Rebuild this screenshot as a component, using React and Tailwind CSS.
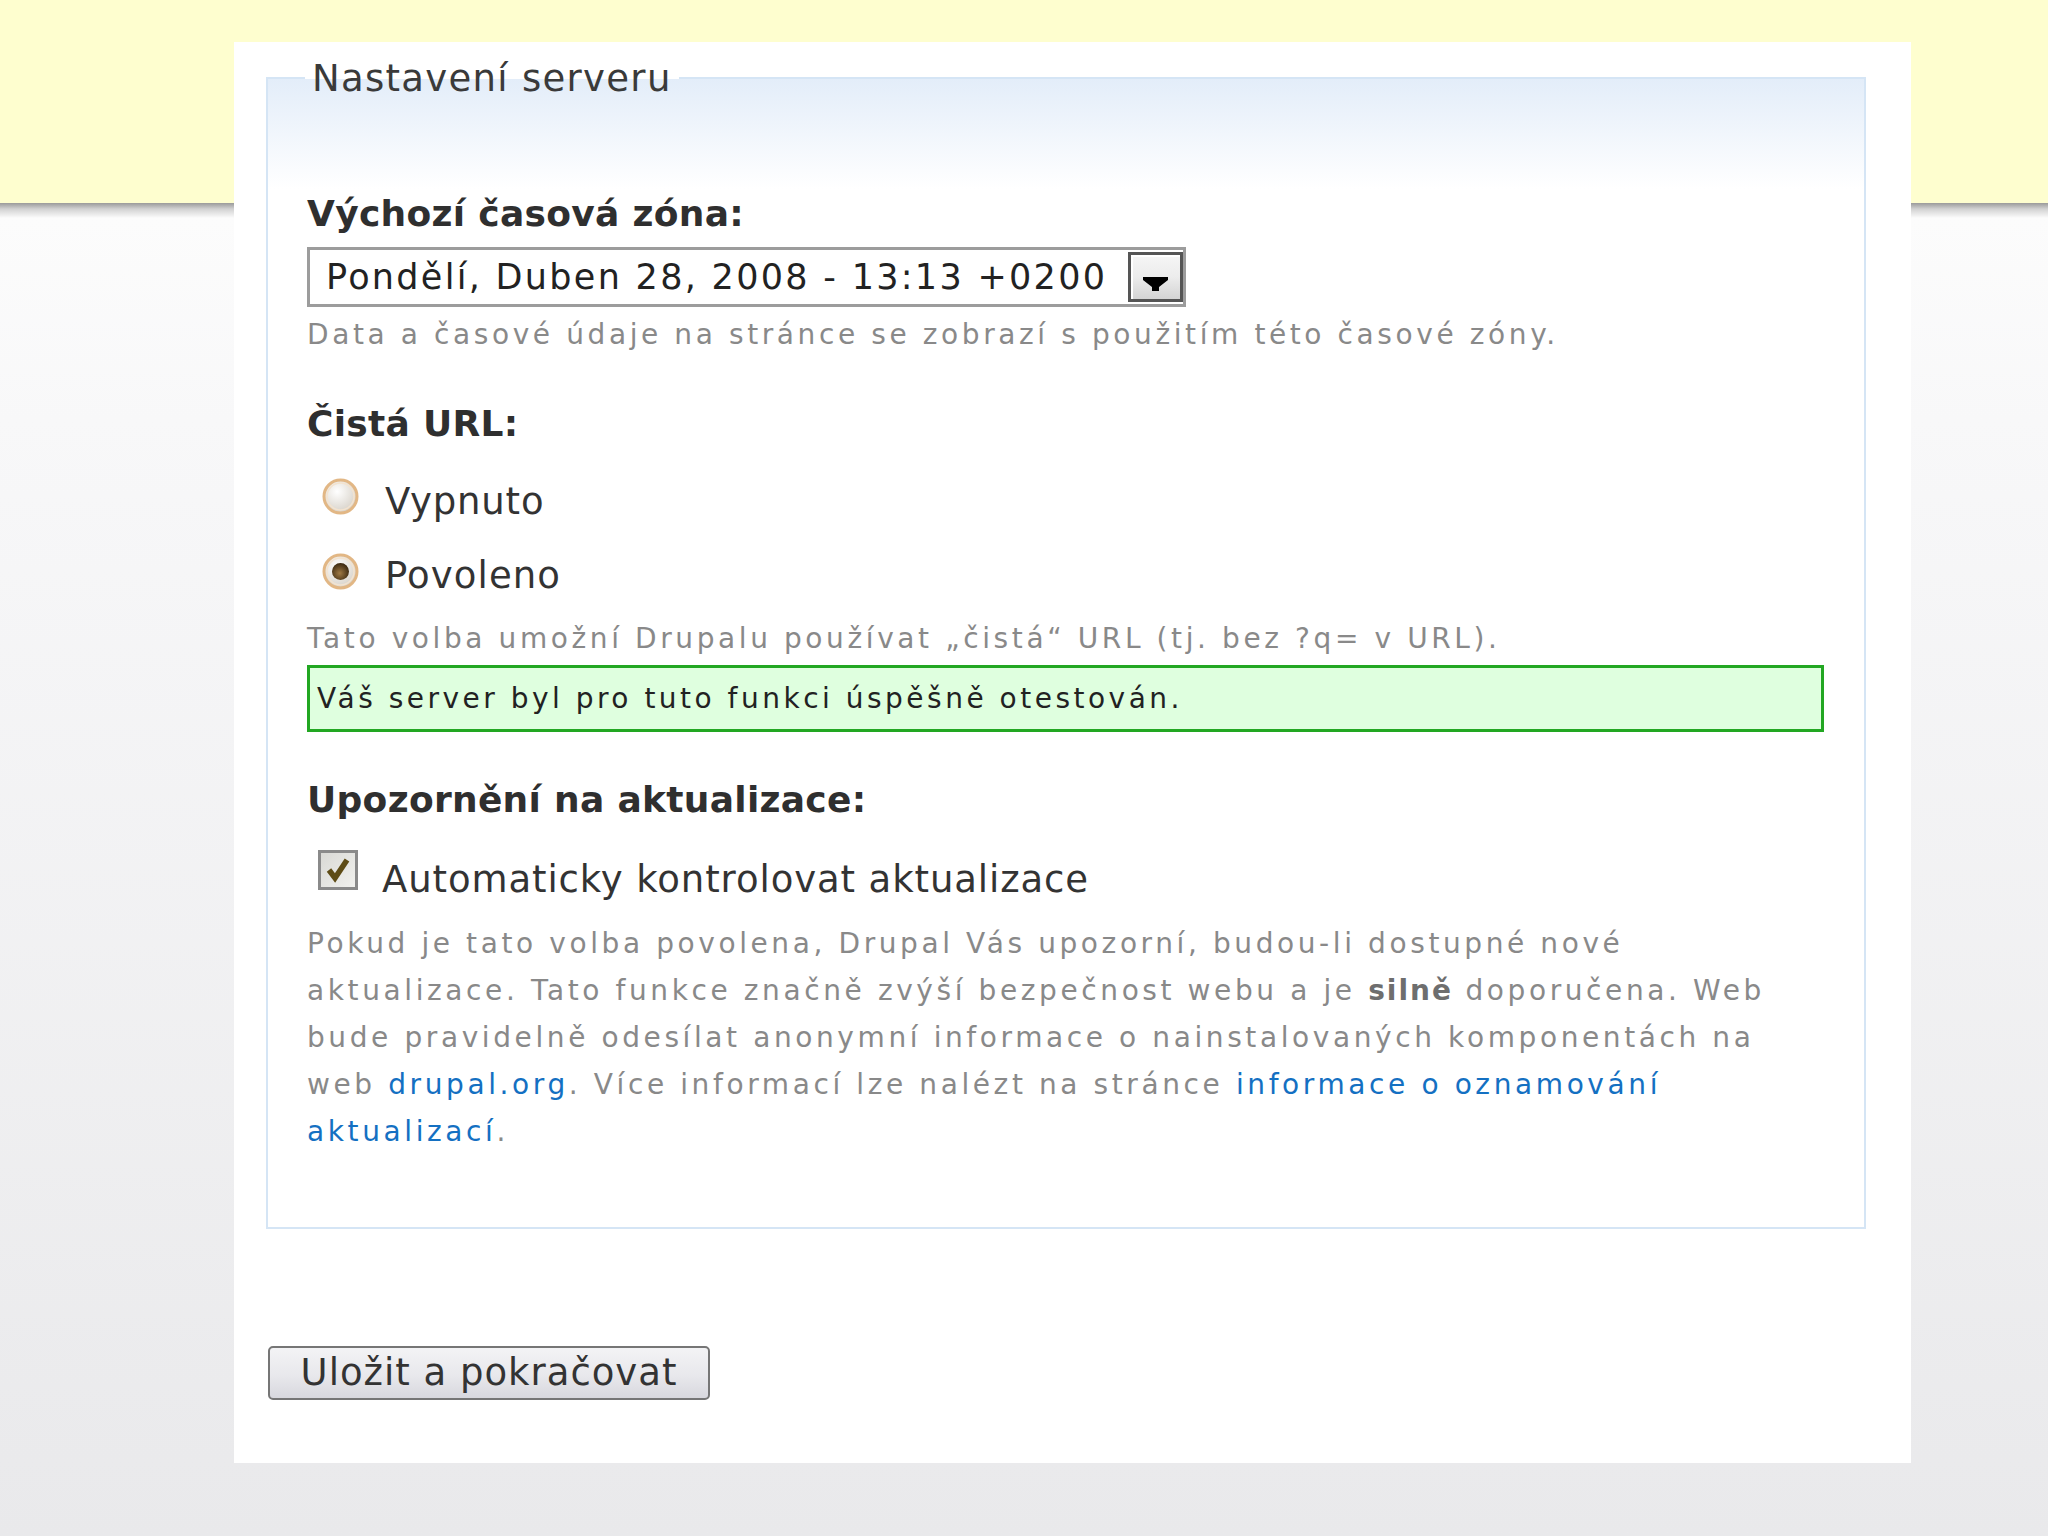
import React from 'react';

const Radio = ({ checked }) => (
  <svg width="37" height="37" viewBox="0 0 37 37" className="shrink-0">
    <defs>
      <radialGradient id={checked ? 'rfOn' : 'rfOff'} cx="40%" cy="35%" r="70%">
        <stop offset="0" stopColor="#ffffff" />
        <stop offset="1" stopColor="#d4cec4" />
      </radialGradient>
      <radialGradient id="dot" cx="45%" cy="60%" r="60%">
        <stop offset="0" stopColor="#a07a44" />
        <stop offset="1" stopColor="#3a2810" />
      </radialGradient>
    </defs>
    <circle cx="18.5" cy="18.5" r="16.5" fill={`url(#${checked ? 'rfOn' : 'rfOff'})`} stroke="#e2b785" strokeWidth="3" />
    <circle cx="18.5" cy="18.5" r="13.5" fill="none" stroke="#f3e3cf" strokeWidth="1.5" />
    {checked && <circle cx="18.5" cy="18.5" r="8.5" fill="url(#dot)" />}
  </svg>
);

const Checkbox = () => (
  <svg width="40" height="40" viewBox="0 0 40 40" className="shrink-0">
    <defs>
      <linearGradient id="cb" x1="0" y1="0" x2="1" y2="1">
        <stop offset="0" stopColor="#d8d8d4" />
        <stop offset="1" stopColor="#f2f2ef" />
      </linearGradient>
    </defs>
    <rect x="1.5" y="1.5" width="37" height="37" fill="url(#cb)" stroke="#8a8a8a" strokeWidth="3" />
    <path d="M11 20 L17 28 L29 10" fill="none" stroke="#5e4c16" strokeWidth="5.5" strokeLinejoin="miter" />
  </svg>
);

export default function App() {
  const link = 'text-[#1470c2]';
  return (
    <div className="w-[2048px] h-[1536px] overflow-hidden pt-[42px] font-['DejaVu_Sans',sans-serif] bg-[linear-gradient(to_bottom,#fefecf_0px,#fefecf_203px,#9a9a9a_203px,#d2d2d2_209px,#fcfcfc_218px,#f8f8f9_420px,#e9e9eb_1536px)]">
      {/* white panel */}
      <div className="ml-[234px] w-[1677px] h-[1421px] bg-white pt-[13px]">
        <fieldset className="ml-[32px] w-[1600px] border-2 border-[#d5e5f5] bg-[linear-gradient(to_bottom,#e3edf9_0px,#ffffff_110px)] pl-[39px] pr-[40px] pb-[72px]">
          <legend className="-ml-[2px] px-[7px] pt-[2px] text-[37px] leading-[44px] tracking-[1.3px] text-[#3a3a3a]">
            Nastavení serveru
          </legend>

          {/* timezone */}
          <div className="mt-[91px] text-[36px] leading-[44px] font-bold tracking-[0.3px] text-[#2f2f2f]">
            Výchozí časová zóna:
          </div>
          <div className="mt-[11px] w-[879px] h-[60px] border-[3px] border-[#9c9c9c] bg-white flex items-center justify-between py-[2px] pl-[16px]">
            <span className="text-[35px] leading-[44px] tracking-[2.3px] text-[#222]">
              Pondělí, Duben 28, 2008 - 13:13 +0200
            </span>
            <div className="w-[55px] h-full border-[3px] border-[#555] bg-[linear-gradient(to_bottom,#f6f6f6_0%,#ececec_50%,#d4d4d4_100%)] shadow-[inset_2px_2px_0_#ffffff] flex items-center justify-center">
              <svg width="49" height="44" viewBox="0 0 49 44">
                <polygon points="12,22 37,22 37,25 28,32 28,36 21,36 21,32 12,25" fill="#000" />
              </svg>
            </div>
          </div>
          <p className="mt-[4px] text-[28px] leading-[47px] tracking-[3.6px] text-[#898989]">
            Data a časové údaje na stránce se zobrazí s použitím této časové zóny.
          </p>

          {/* clean url */}
          <div className="mt-[44px] text-[36px] leading-[44px] font-bold tracking-[0.3px] text-[#2f2f2f]">
            Čistá URL:
          </div>
          <label className="mt-[34px] flex items-start h-[44px]">
            <span className="ml-[15px] -mt-[2px]">
              <Radio />
            </span>
            <span className="ml-[26px] text-[37px] leading-[44px] tracking-[0.8px] text-[#333]">Vypnuto</span>
          </label>
          <label className="mt-[30px] flex items-start h-[44px]">
            <span className="ml-[15px] -mt-[1px]">
              <Radio checked />
            </span>
            <span className="ml-[26px] text-[37px] leading-[44px] tracking-[1.1px] text-[#333]">Povoleno</span>
          </label>
          <p className="mt-[17px] text-[28px] leading-[47px] tracking-[3.6px] text-[#898989]">
            Tato volba umožní Drupalu používat „čistá“ URL (tj. bez ?q= v URL).
          </p>
          <div className="mt-[3px] h-[67px] border-[3px] border-[#22a722] bg-[#dfffdf] pl-[7px] text-[28px] leading-[61px] tracking-[3.5px] text-[#222]">
            Váš server byl pro tuto funkci úspěšně otestován.
          </div>

          {/* update notifications */}
          <div className="mt-[46px] text-[36px] leading-[44px] font-bold tracking-[0.3px] text-[#2f2f2f]">
            Upozornění na aktualizace:
          </div>
          <label className="mt-[36px] flex items-start h-[44px]">
            <span className="ml-[11px] -mt-[8px]">
              <Checkbox />
            </span>
            <span className="ml-[24px] text-[37px] leading-[44px] tracking-[0.9px] text-[#333]">
              Automaticky kontrolovat aktualizace
            </span>
          </label>
          <p className="mt-[18px] text-[28px] leading-[47px] tracking-[3.6px] text-[#898989] whitespace-nowrap">
            Pokud je tato volba povolena, Drupal Vás upozorní, budou-li dostupné nové
            <br />
            aktualizace. Tato funkce značně zvýší bezpečnost webu a je <strong className="font-bold text-[#6e6e6e] tracking-[2px]">silně</strong> doporučena. Web
            <br />
            bude pravidelně odesílat anonymní informace o nainstalovaných komponentách na
            <br />
            web <a href="#" className={link}>drupal.org</a>. Více informací lze nalézt na stránce{' '}
            <a href="#" className={link}>informace o oznamování</a>
            <br />
            <a href="#" className={link}>aktualizací</a>.
          </p>
        </fieldset>

        <button className="mt-[117px] ml-[34px] w-[442px] h-[54px] rounded-[5px] border-2 border-[#767676] bg-[linear-gradient(to_bottom,#f3f3f5_0%,#e8e8ec_55%,#d8d8de_100%)] text-[37px] leading-[44px] tracking-[1px] text-[#333] flex items-center justify-center">
          Uložit a pokračovat
        </button>
      </div>
    </div>
  );
}
